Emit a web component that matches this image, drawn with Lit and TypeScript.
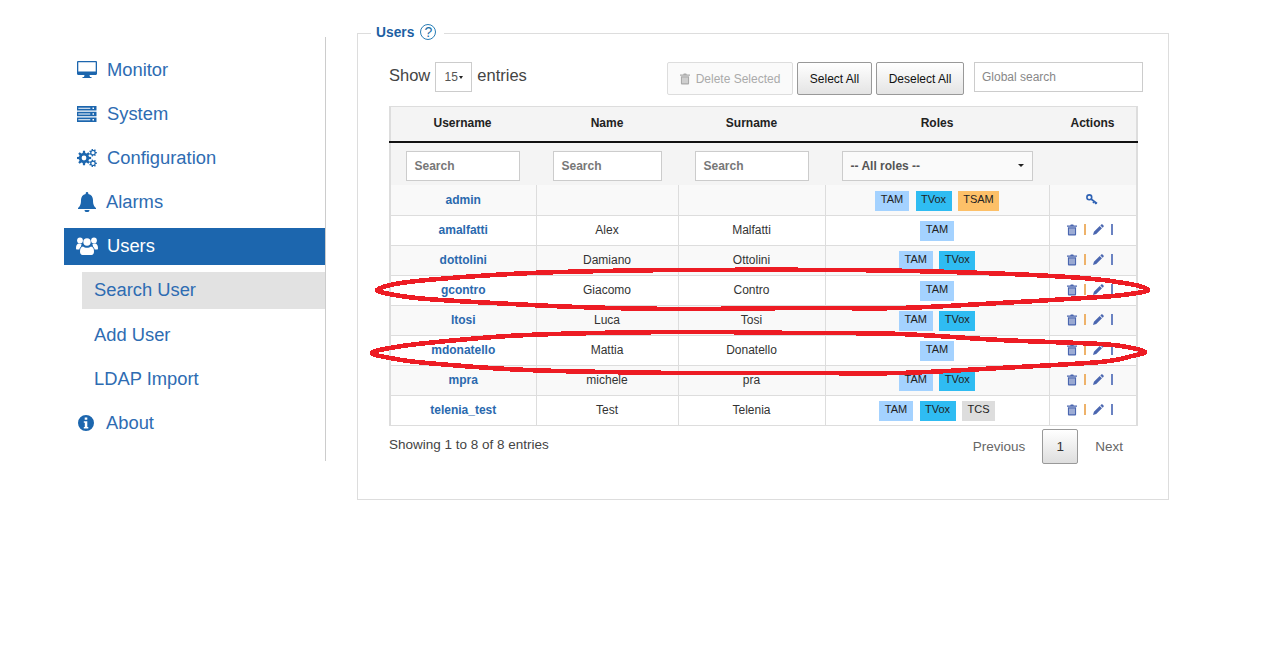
import { LitElement, html, css, svg } from "lit";
import { customElement } from "lit/decorators.js";

type Pt = [number, number];
function smooth(p: Pt[]): string {
  const n = p.length;
  let d = `M${p[0][0]} ${p[0][1]}`;
  for (let i = 0; i < n; i++) {
    const a = p[(i - 1 + n) % n], b = p[i], c = p[(i + 1) % n], e = p[(i + 2) % n];
    const c1 = [b[0] + (c[0] - a[0]) / 6, b[1] + (c[1] - a[1]) / 6];
    const c2 = [c[0] - (e[0] - b[0]) / 6, c[1] - (e[1] - b[1]) / 6];
    d += `C${c1[0].toFixed(1)} ${c1[1].toFixed(1)} ${c2[0].toFixed(1)} ${c2[1].toFixed(1)} ${c[0]} ${c[1]}`;
  }
  return d + "Z";
}
function gear(cx: number, cy: number, r: number, hole: number, teeth = 8): string {
  let d = "";
  const step = (Math.PI * 2) / teeth;
  const ri = r * 0.72;
  for (let i = 0; i < teeth; i++) {
    const t = i * step;
    const pts: [number, number][] = [
      [t - step * 0.32, ri], [t - step * 0.18, r], [t + step * 0.18, r], [t + step * 0.32, ri],
    ];
    for (const [ang, rad] of pts) {
      d += `${d ? "L" : "M"}${(cx + Math.cos(ang) * rad).toFixed(2)} ${(cy + Math.sin(ang) * rad).toFixed(2)}`;
    }
  }
  d += `Z M${cx - hole} ${cy}a${hole} ${hole} 0 1 0 ${hole * 2} 0a${hole} ${hole} 0 1 0 ${-hole * 2} 0Z`;
  return d;
}

const ring1: Pt[] = [[377,290],[395,284],[427,280],[493,275],[560,272],[677,270],[850,270],[983,273],[1083,278],[1130,284],[1148,290],[1130,294],[1100,297],[1000,303],[900,308],[800,308],[677,309],[577,307],[493,303],[427,299],[395,295]];
const ring2: Pt[] = [[372,353],[390,348],[427,343],[527,335],[677,332],[800,333],[900,334],[1000,340],[1100,344],[1132,348],[1145,352],[1132,356],[1100,362],[1000,368],[900,373],[800,373],[677,373],[527,370],[427,363],[390,358]];

const icons = {
  monitor: svg`<svg class="ic" viewBox="0 0 20 18" width="20" height="18"><path fill="currentColor" fill-rule="evenodd" d="M1.200 0h17.600c.7 0 1.200.5 1.200 1.200v11.600c0 .7-.5 1.200-1.200 1.200H12.500l.5 2h1.500v1h-9v-1H7l.5-2H1.200C.5 14 0 13.500 0 12.800V1.200C0 .5.500 0 1.200 0zM1.300 1.300v9.200h17.400V1.300z"/></svg>`,
  server: svg`<svg class="ic" viewBox="0 0 20 16" width="20" height="16"><path fill="currentColor" fill-rule="evenodd" d="M0 0h19.500v4.400H0zM0 5.800h19.500v4.400H0zM0 11.600h19.500V16H0zM1.300 1.700v1h12v-1zM15.500 1.500v1.400h1.500V1.500zM1.300 7.500v1h12v-1zM15.500 7.300v1.400h1.500V7.300zM1.300 13.300v1h12v-1zM15.500 13.100v1.400h1.500v-1.400z"/></svg>`,
  cogs: svg`<svg class="ic" viewBox="0 0 20 18" width="20" height="18"><path fill="currentColor" fill-rule="evenodd" d="${gear(7, 9, 7.2, 2.4)}"/><path fill="currentColor" fill-rule="evenodd" d="${gear(16, 3.700, 3.900, 1.600, 7)}"/><path fill="currentColor" fill-rule="evenodd" d="${gear(16, 14.300, 3.900, 1.600, 7)}"/></svg>`,
  bell: svg`<svg class="ic" viewBox="0 0 18 20" width="18" height="20"><path fill="currentColor" d="M9 0c-.8 0-1.300.6-1.300 1.300v.6C4.700 2.500 3 4.900 3 8c0 5-1.300 6.500-3 8v1h18v-1c-1.700-1.500-3-3-3-8 0-3.100-1.700-5.500-4.700-6.100v-.6C10.300.6 9.800 0 9 0zM6.500 18a2.500 2.200 0 0 0 5 0z"/></svg>`,
  users: svg`<svg class="ic" viewBox="0 0 22 18" width="22" height="18"><g fill="currentColor"><circle cx="4" cy="3.500" r="2.900"/><circle cx="18" cy="3.500" r="2.900"/><circle cx="11" cy="5" r="3.700"/><path d="M0 11c0-3 1.300-4.500 3-4.500 1 0 1.600.5 2.600.5-.3.700-.5 1.500-.5 2.500-.8.600-1.400 1.500-1.800 3H1C.3 12.500 0 12 0 11zM22 11c0-3-1.300-4.500-3-4.500-1 0-1.600.5-2.600.5.300.7.500 1.500.5 2.500.8.600 1.400 1.500 1.800 3h2.300c.7 0 1-.5 1-1.500zM7 9.500c1 .8 2.500 1.300 4 1.300s3-.5 4-1.300c2 .2 3 2 3 5 0 2-1 3.500-2.500 3.500h-9C5 18 4 16.500 4 14.500c0-3 1-4.800 3-5z"/></g></svg>`,
  info: svg`<svg class="ic" viewBox="0 0 16 16" width="16" height="16"><path fill="currentColor" fill-rule="evenodd" d="M8 0a8 8 0 1 0 0 16A8 8 0 0 0 8 0zM6.700 2.500h2.600v2.200H6.700zM5.800 6.200h3.500v5.800h1v1.500H5.800V12h1V7.700h-1z"/></svg>`,
};

const trash = svg`<svg viewBox="0 0 11 12" width="10" height="12"><path fill="currentColor" fill-rule="evenodd" d="M3.500 1 4.200 0h2.600l.7 1H11v1.300H0V1zM1 3h9v8c0 .6-.4 1-1 1H2c-.6 0-1-.4-1-1zM2.800 4.300v6.400h1V4.300zM5 4.300v6.400h1V4.300zM7.200 4.300v6.400h1V4.300z"/></svg>`;
const pencil = svg`<svg viewBox="0 0 12 12" width="11" height="11"><path fill="currentColor" d="M9 0.500c.4-.4 1-.4 1.400 0l1.100 1.100c.4.400.4 1 0 1.400l-1 1L8 1.500zM7.300 2.200l2.500 2.500-6.300 6.300-3.500 1 1-3.500z"/></svg>`;
const keyIc = svg`<svg viewBox="0 0 12 11" width="12" height="11"><g fill="none" stroke="currentColor" stroke-width="1.600"><circle cx="3.300" cy="3.300" r="2.400"/><path d="M5 5l6 4.500M8.200 7.400 7 9M10 8.700 9.200 10"/></g></svg>`;

interface Row { u: string; n: string; s: string; r: string[]; admin?: boolean }
const rows: Row[] = [
  { u: "admin", n: "", s: "", r: ["TAM", "TVox", "TSAM"], admin: true },
  { u: "amalfatti", n: "Alex", s: "Malfatti", r: ["TAM"] },
  { u: "dottolini", n: "Damiano", s: "Ottolini", r: ["TAM", "TVox"] },
  { u: "gcontro", n: "Giacomo", s: "Contro", r: ["TAM"] },
  { u: "ltosi", n: "Luca", s: "Tosi", r: ["TAM", "TVox"] },
  { u: "mdonatello", n: "Mattia", s: "Donatello", r: ["TAM"] },
  { u: "mpra", n: "michele", s: "pra", r: ["TAM", "TVox"] },
  { u: "telenia_test", n: "Test", s: "Telenia", r: ["TAM", "TVox", "TCS"] },
];

@customElement("app-root")
export class AppRoot extends LitElement {
  static styles = css`
    :host { display: block; position: relative; width: 1276px; height: 664px; overflow: hidden; background: #fff;
      font-family: "Liberation Sans", Arial, sans-serif; color: #333; }
    * { box-sizing: border-box; }
    .page { display: flex; align-items: flex-start; padding: 23px 0 0 64px; }
    nav { width: 262px; height: 424px; margin-top: 14px; padding-top: 14px; border-right: 1px solid #ccc;
      display: flex; flex-direction: column; gap: 7.2px; }
    .item { height: 37px; display: flex; align-items: center; font-size: 18.35px; color: #2e6cb2; flex: none; }
    .icn { width: 43px; padding-left: 13px; display: flex; align-items: center; color: #1c66ae; }
    .icn.tight { width: 42px; padding-left: 14px; }
    .item.active { background: #1c66ae; color: #fff; }
    .item.active .icn { color: #fff; padding-left: 12px; }
    .sub { margin-left: 18px; padding-left: 12px; }
    .sub.on { background: #e2e2e2; }
    fieldset { margin: 0 0 0 31px; width: 812px; height: 477px; border: 1px solid #ddd; padding: 19px 0 0 31px; min-width: 0; }
    legend { margin-left: -18px; padding: 0 8px 2px 5px; height: 20px; display: flex; align-items: center; gap: 6px;
      font-size: 13.800px; font-weight: bold; color: #1d5fa3; }
    .help { width: 16px; height: 16px; border: 1px solid #2a7db5; border-radius: 50%; display: flex; align-items: center; justify-content: center;
      font-size: 14px; font-weight: normal; color: #1d6fa8; }
    .bar { display: flex; align-items: flex-start; height: 33px; width: 754px; margin-bottom: 11px; }
    .len { display: flex; align-items: center; padding-bottom: 3px; font-size: 16.500px; color: #444; }
    .sel { width: 37px; height: 30px; margin: 0 5px -3px 5px; border: 1px solid #ccc; font-size: 12px; display: flex; align-items: center; justify-content: center; gap: 1px; color: #555; }
    .caret { width: 0; height: 0; border: 2.500px solid transparent; border-top: 3px solid #222; border-bottom: 0; }
    .dd .caret { border-width: 3px; border-top-width: 3px; border-bottom: 0; }
    .btns { margin-left: auto; display: flex; gap: 4px; }
    button { height: 33px; border: 1px solid #999; border-radius: 2px; background: linear-gradient(#fff, #e4e4e4); font: 12px "Liberation Sans", Arial, sans-serif; color: #111; padding: 0; }
    .b1 { width: 126px; border-color: #ddd; background: #fafafa; color: #aaa; display: flex; align-items: center; justify-content: center; gap: 6px; }
    .b1 svg { color: #aaa; }
    .b2 { width: 75px; }
    .b3 { width: 88px; }
    .global { margin-left: 10px; width: 169px; height: 30px; border: 1px solid #ccc; font-size: 12px; color: #888; padding: 0 7px; display: flex; align-items: center; }
    table { border-collapse: collapse; table-layout: fixed; width: 747px; font-size: 12px; border-right: 2px solid #ddd; border-left: 2px solid #ddd; }
    thead tr.h th { height: 35px; background: #f4f4f4; border-top: 1px solid #ddd; border-bottom: 2px solid #111; font-weight: bold; color: #222; padding: 0 0 2px; }
    thead tr.h { height: 35px; }
    thead tr.f td { height: 43px; background: #f4f4f4; padding: 8px 0 0; vertical-align: top; }
    thead tr.h th:first-child, thead tr.f td:first-child { padding-right: 2px; }
    .fw { display: flex; justify-content: center; }
    .inp { width: 114px; height: 30px; background: #fff; border: 1px solid #ccc; font-weight: bold; color: #777; padding: 0 8px; display: flex; align-items: center; text-align: left; }
    .inp.mid { width: 109px; }
    .dd { width: 191px; height: 30px; background: #fafafa; border: 1px solid #ccc; font-weight: bold; color: #555; padding: 0 8px; display: flex; align-items: center; justify-content: space-between; font-size: 12px; }
    tbody td { height: 30px; text-align: center; border: 1px solid #ddd; padding: 0 0 2px; color: #333; border-top: 0; }
    tbody tr:first-child td { height: 31px; padding-top: 2px; }
    tbody tr:nth-child(odd) td { background: #f9f9f9; }
    .name { font-weight: bold; color: #2a69ae; }
    .tags { display: flex; justify-content: center; gap: 6.500px; margin-top: 2px; }
    .tag { height: 20px; padding: 1px 4px 0; font-size: 11px; line-height: 14px; color: #222; }
    .TAM { background: #a4d2ff; width: 34px; }
    .TVox { background: #2fbcf2; width: 36px; }
    .TSAM { background: #fdc068; width: 41px; }
    .TCS { background: #dddddd; width: 33px; }
    .acts { display: flex; justify-content: center; align-items: center; gap: 7px; color: #4a66b0; margin-left: -6px; }
    .acts svg { display: block; }
    .pipe { width: 2px; height: 11px; background: #eeb26a; }
    .pipe.bl { background: #6a82c2; }
    .key { display: flex; justify-content: center; color: #2f62b4; margin-left: -1px; }
    .foot { display: flex; width: 748px; align-items: flex-start; padding-top: 3px; font-size: 13.500px; color: #444; }
    .info { margin-top: 8px; }
    .pg { margin-left: auto; display: flex; align-items: center; height: 35px; color: #666; padding-right: 14px; }
    .pg .cur { width: 36px; height: 35px; margin: 0 17px; border: 1px solid #999; border-radius: 2px; background: linear-gradient(#fff, #dedede); color: #333; display: flex; align-items: center; justify-content: center; }
    .rings { position: absolute; left: 0; top: 0; pointer-events: none; shape-rendering: crispEdges; }
  `;

  render() {
    return html`
      <div class="page">
        <nav>
          <div class="item"><span class="icn">${icons.monitor}</span>Monitor</div>
          <div class="item"><span class="icn">${icons.server}</span>System</div>
          <div class="item"><span class="icn">${icons.cogs}</span>Configuration</div>
          <div class="item"><span class="icn tight">${icons.bell}</span>Alarms</div>
          <div class="item active"><span class="icn">${icons.users}</span>Users</div>
          <div class="item sub on">Search User</div>
          <div class="item sub">Add User</div>
          <div class="item sub">LDAP Import</div>
          <div class="item"><span class="icn tight">${icons.info}</span>About</div>
        </nav>
        <fieldset>
          <legend>Users <span class="help">?</span></legend>
          <div class="bar">
            <div class="len">Show <span class="sel">15<i class="caret"></i></span> entries</div>
            <div class="btns">
              <button class="b1">${trash} Delete Selected</button>
              <button class="b2">Select All</button>
              <button class="b3">Deselect All</button>
            </div>
            <div class="global">Global search</div>
          </div>
          <table>
            <colgroup><col style="width:146px"><col style="width:142px"><col style="width:147px"><col style="width:224px"><col style="width:88px"></colgroup>
            <thead>
              <tr class="h"><th>Username</th><th>Name</th><th>Surname</th><th>Roles</th><th>Actions</th></tr>
              <tr class="f">
                <td><div class="fw"><div class="inp">Search</div></div></td>
                <td><div class="fw"><div class="inp mid">Search</div></div></td>
                <td><div class="fw"><div class="inp">Search</div></div></td>
                <td><div class="fw"><div class="dd">-- All roles --<i class="caret"></i></div></div></td>
                <td></td>
              </tr>
            </thead>
            <tbody>
              ${rows.map((r) => html`<tr>
                <td class="name">${r.u}</td><td>${r.n}</td><td>${r.s}</td>
                <td><div class="tags">${r.r.map((t) => html`<span class="tag ${t}">${t}</span>`)}</div></td>
                <td>${r.admin
                  ? html`<div class="key">${keyIc}</div>`
                  : html`<div class="acts">${trash}<i class="pipe"></i>${pencil}<i class="pipe bl"></i></div>`}</td>
              </tr>`)}
            </tbody>
          </table>
          <div class="foot">
            <div class="info">Showing 1 to 8 of 8 entries</div>
            <div class="pg">Previous<span class="cur">1</span>Next</div>
          </div>
        </fieldset>
      </div>
      <svg class="rings" width="1276" height="664" viewBox="0 0 1276 664">
        <path d="${smooth(ring1)}" fill="none" stroke="#ed1c24" stroke-width="4.600"/>
        <path d="${smooth(ring2)}" fill="none" stroke="#ed1c24" stroke-width="4.600"/>
      </svg>
    `;
  }
}
